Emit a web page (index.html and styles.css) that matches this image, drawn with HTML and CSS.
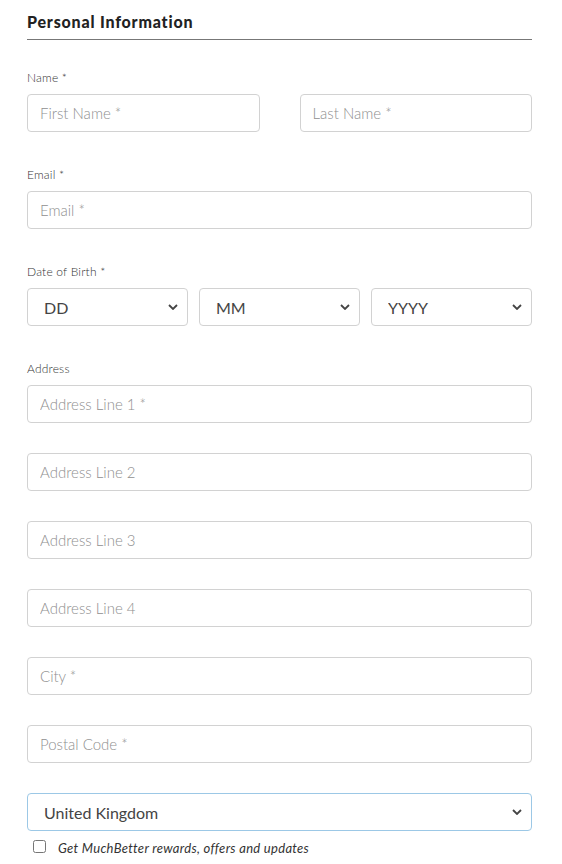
FILE: index.html
```html
<!DOCTYPE html>
<html lang="en">
<head>
    <meta charset="UTF-8">
    <title>Personal Information</title>
    <link rel="stylesheet" href="styles.css">
</head>
<body>

    <form class="formulario">
        <h3 class="titulo">Personal Information</h3>

        <div class="campo">
            <label class="etiqueta">Name *</label>
            <div class="fila fila-nombre">
                <input type="text" placeholder="First Name *">
                <input type="text" placeholder="Last Name *">
            </div>
        </div>

        <div class="campo">
            <label class="etiqueta" for="email">Email *</label>
            <input type="email" id="email" placeholder="Email *">
        </div>

        <div class="campo">
            <label class="etiqueta">Date of Birth *</label>
            <div class="fila fila-fecha">
                <div class="selector">
                    <select><option>DD</option></select>
                    <svg class="flecha" viewBox="0 0 10 6"><path d="M1 1l4 4 4-4"/></svg>
                </div>
                <div class="selector">
                    <select><option>MM</option></select>
                    <svg class="flecha" viewBox="0 0 10 6"><path d="M1 1l4 4 4-4"/></svg>
                </div>
                <div class="selector">
                    <select><option>YYYY</option></select>
                    <svg class="flecha" viewBox="0 0 10 6"><path d="M1 1l4 4 4-4"/></svg>
                </div>
            </div>
        </div>

        <div class="campo">
            <label class="etiqueta">Address</label>
            <div class="lista-direccion">
                <input type="text" placeholder="Address Line 1 *">
                <input type="text" placeholder="Address Line 2">
                <input type="text" placeholder="Address Line 3">
                <input type="text" placeholder="Address Line 4">
                <input type="text" placeholder="City *">
                <input type="text" placeholder="Postal Code *">
                <div class="selector selector-pais">
                    <select><option>United Kingdom</option></select>
                    <svg class="flecha" viewBox="0 0 10 6"><path d="M1 1l4 4 4-4"/></svg>
                </div>
            </div>
            <label class="casilla">
                <input type="checkbox">
                <span>Get MuchBetter rewards, offers and updates</span>
            </label>
        </div>
    </form>

</body>
</html>
```

FILE: styles.css
```css
body {
    font-family: Lato, "Open Sans", sans-serif;
    margin: 0;
    background: white;
    color: #444;
}

.formulario {
    width: 505px;
    padding: 11px 0 0 27px;
}

.titulo {
    margin: 0 0 30px;
    padding-bottom: 7px;
    font-size: 16px;
    line-height: 21px;
    font-weight: 900;
    letter-spacing: 0.8px;
    color: #222;
    border-bottom: 1px solid #777;
}

.campo {
    margin-bottom: 35px;
}

.etiqueta {
    display: block;
    font-size: 12px;
    line-height: 16px;
    font-weight: 300;
    letter-spacing: 0.2px;
    color: #333;
    margin-bottom: 8px;
}

.fila {
    display: flex;
}

.fila-nombre {
    gap: 40px;
}

.fila-fecha {
    gap: 11px;
}

.fila > * {
    flex: 1;
    min-width: 0;
}

input[type="text"],
input[type="email"],
select {
    display: block;
    width: 100%;
    height: 38px;
    box-sizing: border-box;
    padding: 0 12px;
    border: 1px solid #d2d2d2;
    border-radius: 4px;
    background: white;
    font-family: Lato, sans-serif;
    font-size: 15px;
    color: #444;
    outline: none;
}

input::placeholder {
    color: #8f8f8f;
    font-weight: 300;
}

.lista-direccion {
    display: flex;
    flex-direction: column;
    gap: 30px;
}

.selector {
    position: relative;
}

.selector select {
    appearance: none;
    -webkit-appearance: none;
    padding-left: 16px;
    font-size: 16px;
    color: #444;
}

.selector-pais select {
    border-color: #9cc8e6;
}

.flecha {
    position: absolute;
    right: 10px;
    top: 16px;
    width: 10px;
    height: 6px;
    fill: none;
    stroke: #444;
    stroke-width: 1.8;
    pointer-events: none;
}

.casilla {
    display: flex;
    align-items: flex-start;
    gap: 12px;
    margin-top: 8px;
    padding-left: 6px;
    font-size: 13px;
    line-height: 18px;
    font-style: italic;
    letter-spacing: 0.3px;
    color: #333;
}

.casilla input {
    margin: 1px 0 0;
    width: 13px;
    height: 13px;
}
```
